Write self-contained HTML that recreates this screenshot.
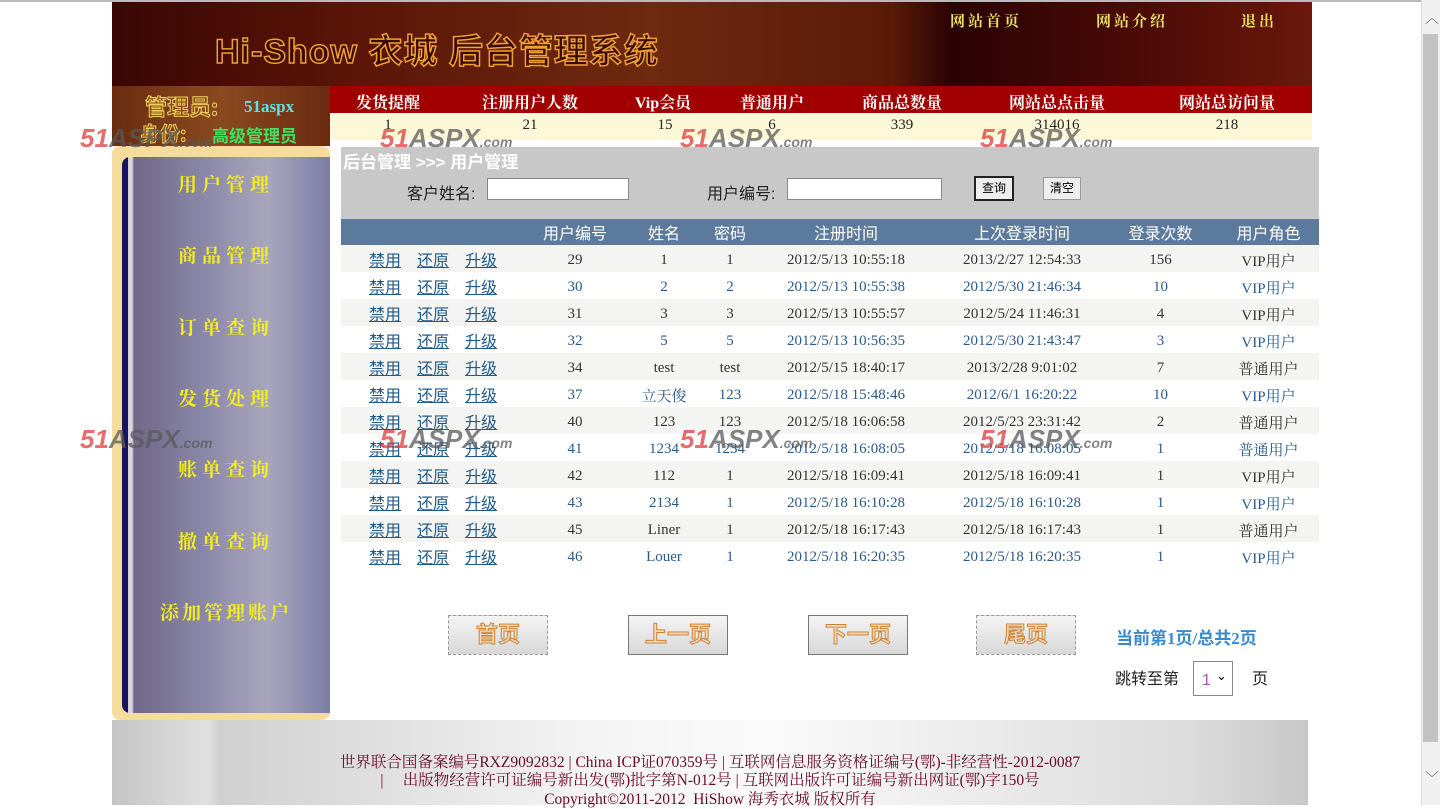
<!DOCTYPE html>
<html><head><meta charset="utf-8"><style>
body{margin:0;width:1440px;height:805px;overflow:hidden;background:#fff;font-family:"Liberation Serif","Noto Serif CJK SC",serif;position:relative}
.a{position:absolute}
.hdr{left:112px;top:2px;width:1200px;height:84px;background:linear-gradient(90deg,#3a0604 0%,#5a1508 20%,#6e2a10 45%,#5a1a08 65%,#2a0303 70%,#4a0a06 85%,#6a180c 100%)}
.title{left:215px;top:24px;font-size:34px;font-weight:bold;color:#3a0a02;-webkit-text-stroke:1.5px #f0a030;font-family:"Liberation Sans","Noto Sans CJK SC",sans-serif;letter-spacing:1px}
.nav{top:10px;font-size:15px;font-weight:bold;color:#e8e060;letter-spacing:3px;font-family:"Noto Serif CJK SC",serif}
.adm{left:112px;top:86px;width:218px;height:60px;background:linear-gradient(90deg,#6a2c10,#8a4a20,#6a2a10)}
.stat{left:330px;top:86px;width:982px;height:27px;background:#a00000;color:#fff;font-weight:bold;font-size:16px}
.val{left:330px;top:113px;width:982px;height:27px;background:#fdf8d8;color:#222;font-size:15px}
.stat span,.val span{position:absolute;top:4px;transform:translateX(-50%);white-space:nowrap}
.side{left:112px;top:146px;width:218px;height:574px;background:#f3dc9c;border-radius:8px}
.sidein{left:122px;top:157px;width:208px;height:556px;background:linear-gradient(90deg,#1a1460 0,#1a1460 6px,#d8d0d8 6px,#e0d8e0 10px,#706888 12px,#8a88a8 40%,#a8a6bc 70%,#7c7ca4 100%);border-radius:8px 0 0 8px}
.mi{left:122px;width:208px;text-align:center;color:#f2ec20;font-size:19px;font-weight:bold;letter-spacing:5px;font-family:"Noto Serif CJK SC",serif}
.gray{left:341px;top:147px;width:978px;height:72px;background:#c8c8c8}
table{position:absolute;left:341px;top:219px;width:978px;border-collapse:collapse;font-size:15px;color:#333}
th{background:#5c7b9c;color:#fff;font-weight:normal;font-size:16px;height:26px;padding:0;font-family:"Liberation Sans","Noto Sans CJK SC",sans-serif}
td{height:27px;padding:3px 0 0;box-sizing:border-box;text-align:center}
tr:nth-child(even) td{background:#f4f4f2}
td.ac{text-align:left;padding-left:28px;padding-top:0}
td.ac a{color:#1f5a8a;text-decoration:underline;margin-right:16px;font-size:16px;font-family:"Liberation Sans","Noto Sans CJK SC",sans-serif}
.blue td:nth-child(n+2){color:#2a5a8a}
.pb{top:615px;width:98px;height:38px;background:linear-gradient(#f4f4f4,#d8d8d8);border:1px dashed #999;text-align:center;line-height:38px;font-size:22px;font-weight:bold;color:#f0e0c8;-webkit-text-stroke:1px #d08030;font-family:"Liberation Sans","Noto Sans CJK SC",sans-serif}
.foot{left:112px;top:720px;width:1196px;height:85px;background:linear-gradient(90deg,#c4c4c4,#e0e0e0 8%,#d0d0d0 9%,#f4f4f4 40%,#fafafa 55%,#dcdcdc 90%,#c8c8c8)}
.ft{left:112px;width:1196px;text-align:center;color:#6a0a2a;font-size:15.5px;white-space:pre}
.wm{font-family:"Liberation Sans",sans-serif;font-weight:bold;font-style:italic;font-size:26px;color:rgba(220,60,60,.75)}
.wm b{color:rgba(90,90,90,.75)}.wm i{font-size:14px;color:rgba(90,90,90,.75)}
</style></head><body>
<div class="a" style="left:0;top:0;width:1440px;height:2px;background:#bbb"></div>
<div class="a hdr"></div>
<div class="a title">Hi-Show 衣城 后台管理系统</div>
<div class="a nav" style="left:950px">网站首页</div>
<div class="a nav" style="left:1096px">网站介绍</div>
<div class="a nav" style="left:1241px">退出</div>
<div class="a adm"></div>
<div class="a" style="left:145px;top:90px;font-size:22px;font-weight:bold;color:#8a4a10;-webkit-text-stroke:1px #f0d060;font-family:'Noto Sans CJK SC',sans-serif">管理员:</div>
<div class="a" style="left:244px;top:97px;font-size:17px;font-weight:bold;color:#60e0e0">51aspx</div>
<div class="a" style="left:140px;top:118px;font-size:20px;font-weight:bold;color:#8a4a10;-webkit-text-stroke:1px #f0d060;font-family:'Noto Sans CJK SC',sans-serif">身份:</div>
<div class="a" style="left:212px;top:122px;font-size:17px;font-weight:bold;color:#40e060;font-family:'Noto Sans CJK SC',sans-serif">高级管理员</div>
<div class="a stat"><span style="left:58px">发货提醒</span><span style="left:200px">注册用户人数</span><span style="left:333px">Vip会员</span><span style="left:442px">普通用户</span><span style="left:572px">商品总数量</span><span style="left:727px">网站总点击量</span><span style="left:897px">网站总访问量</span></div>
<div class="a val"><span style="left:58px">1</span><span style="left:200px">21</span><span style="left:335px">15</span><span style="left:442px">6</span><span style="left:572px">339</span><span style="left:727px">314016</span><span style="left:897px">218</span></div>
<div class="a side"></div>
<div class="a sidein"></div>
<div class="a mi" style="top:170px">用户管理</div>
<div class="a mi" style="top:241px">商品管理</div>
<div class="a mi" style="top:313px">订单查询</div>
<div class="a mi" style="top:384px">发货处理</div>
<div class="a mi" style="top:455px">账单查询</div>
<div class="a mi" style="top:527px">撤单查询</div>
<div class="a mi" style="top:598px;letter-spacing:3px">添加管理账户</div>
<div class="a gray"></div>
<div class="a" style="left:343px;top:148px;color:#fff;font-size:17px;font-weight:bold;font-family:'Liberation Sans','Noto Sans CJK SC',sans-serif">后台管理 &gt;&gt;&gt; 用户管理</div>
<div class="a" style="left:407px;top:180px;font-size:16px;color:#222;font-family:'Liberation Sans','Noto Sans CJK SC',sans-serif">客户姓名:</div>
<div class="a" style="left:487px;top:178px;width:140px;height:20px;background:#fff;border:1px solid #888"></div>
<div class="a" style="left:707px;top:180px;font-size:16px;color:#222;font-family:'Liberation Sans','Noto Sans CJK SC',sans-serif">用户编号:</div>
<div class="a" style="left:787px;top:178px;width:153px;height:20px;background:#fff;border:1px solid #888"></div>
<div class="a" style="left:974px;top:176px;width:36px;height:21px;border:2px solid #222;background:#eee;font-size:12px;text-align:center;line-height:20px;font-family:'Noto Sans CJK SC',sans-serif">查询</div>
<div class="a" style="left:1043px;top:177px;width:36px;height:21px;border:1px solid #999;background:#eee;font-size:12px;text-align:center;line-height:20px;font-family:'Noto Sans CJK SC',sans-serif">清空</div>
<table>
<tr><th style="width:190px"></th><th style="width:88px">用户编号</th><th style="width:90px">姓名</th><th style="width:42px">密码</th><th style="width:190px">注册时间</th><th style="width:162px">上次登录时间</th><th style="width:115px">登录次数</th><th>用户角色</th></tr>
<tr><td class="ac"><a>禁用</a><a>还原</a><a>升级</a></td><td>29</td><td>1</td><td>1</td><td>2012/5/13 10:55:18</td><td>2013/2/27 12:54:33</td><td>156</td><td>VIP用户</td></tr>
<tr class="blue"><td class="ac"><a>禁用</a><a>还原</a><a>升级</a></td><td>30</td><td>2</td><td>2</td><td>2012/5/13 10:55:38</td><td>2012/5/30 21:46:34</td><td>10</td><td>VIP用户</td></tr>
<tr><td class="ac"><a>禁用</a><a>还原</a><a>升级</a></td><td>31</td><td>3</td><td>3</td><td>2012/5/13 10:55:57</td><td>2012/5/24 11:46:31</td><td>4</td><td>VIP用户</td></tr>
<tr class="blue"><td class="ac"><a>禁用</a><a>还原</a><a>升级</a></td><td>32</td><td>5</td><td>5</td><td>2012/5/13 10:56:35</td><td>2012/5/30 21:43:47</td><td>3</td><td>VIP用户</td></tr>
<tr><td class="ac"><a>禁用</a><a>还原</a><a>升级</a></td><td>34</td><td>test</td><td>test</td><td>2012/5/15 18:40:17</td><td>2013/2/28 9:01:02</td><td>7</td><td>普通用户</td></tr>
<tr class="blue"><td class="ac"><a>禁用</a><a>还原</a><a>升级</a></td><td>37</td><td>立天俊</td><td>123</td><td>2012/5/18 15:48:46</td><td>2012/6/1 16:20:22</td><td>10</td><td>VIP用户</td></tr>
<tr><td class="ac"><a>禁用</a><a>还原</a><a>升级</a></td><td>40</td><td>123</td><td>123</td><td>2012/5/18 16:06:58</td><td>2012/5/23 23:31:42</td><td>2</td><td>普通用户</td></tr>
<tr class="blue"><td class="ac"><a>禁用</a><a>还原</a><a>升级</a></td><td>41</td><td>1234</td><td>1234</td><td>2012/5/18 16:08:05</td><td>2012/5/18 16:08:05</td><td>1</td><td>普通用户</td></tr>
<tr><td class="ac"><a>禁用</a><a>还原</a><a>升级</a></td><td>42</td><td>112</td><td>1</td><td>2012/5/18 16:09:41</td><td>2012/5/18 16:09:41</td><td>1</td><td>VIP用户</td></tr>
<tr class="blue"><td class="ac"><a>禁用</a><a>还原</a><a>升级</a></td><td>43</td><td>2134</td><td>1</td><td>2012/5/18 16:10:28</td><td>2012/5/18 16:10:28</td><td>1</td><td>VIP用户</td></tr>
<tr><td class="ac"><a>禁用</a><a>还原</a><a>升级</a></td><td>45</td><td>Liner</td><td>1</td><td>2012/5/18 16:17:43</td><td>2012/5/18 16:17:43</td><td>1</td><td>普通用户</td></tr>
<tr class="blue"><td class="ac"><a>禁用</a><a>还原</a><a>升级</a></td><td>46</td><td>Louer</td><td>1</td><td>2012/5/18 16:20:35</td><td>2012/5/18 16:20:35</td><td>1</td><td>VIP用户</td></tr>
</table>
<div class="a pb" style="left:448px">首页</div>
<div class="a pb" style="left:628px;border-style:solid;border-color:#777">上一页</div>
<div class="a pb" style="left:808px;border-style:solid;border-color:#777">下一页</div>
<div class="a pb" style="left:976px">尾页</div>
<div class="a" style="left:1116px;top:624px;font-size:17px;font-weight:bold;color:#3a8ad0;font-family:'Liberation Serif','Noto Sans CJK SC',serif">当前第1页/总共2页</div>
<div class="a" style="left:1115px;top:665px;font-size:16px;color:#222;font-family:'Liberation Sans','Noto Sans CJK SC',sans-serif">跳转至第</div>
<div class="a" style="left:1193px;top:661px;width:38px;height:33px;border:1px solid #888;background:#fff"><span style="position:absolute;left:8px;top:10px;color:#b050c0;font-size:16px;font-family:'Liberation Sans',sans-serif">1</span><span style="position:absolute;left:22px;top:6px;font-size:13px">⌄</span></div>
<div class="a" style="left:1252px;top:665px;font-size:16px;color:#222;font-family:'Noto Sans CJK SC',sans-serif">页</div>
<div class="a foot"></div>
<div class="a ft" style="top:750px">世界联合国备案编号RXZ9092832 | China ICP证070359号 | 互联网信息服务资格证编号(鄂)-非经营性-2012-0087</div>
<div class="a ft" style="top:768px">|     出版物经营许可证编号新出发(鄂)批字第N-012号 | 互联网出版许可证编号新出网证(鄂)字150号</div>
<div class="a ft" style="top:787px">Copyright©2011-2012  HiShow 海秀衣城 版权所有</div>
<div class="a wm" style="left:80px;top:123px">51<b>ASPX</b><i>.com</i></div>
<div class="a wm" style="left:380px;top:123px">51<b>ASPX</b><i>.com</i></div>
<div class="a wm" style="left:680px;top:123px">51<b>ASPX</b><i>.com</i></div>
<div class="a wm" style="left:980px;top:123px">51<b>ASPX</b><i>.com</i></div>
<div class="a wm" style="left:80px;top:424px">51<b>ASPX</b><i>.com</i></div>
<div class="a wm" style="left:380px;top:424px">51<b>ASPX</b><i>.com</i></div>
<div class="a wm" style="left:680px;top:424px">51<b>ASPX</b><i>.com</i></div>
<div class="a wm" style="left:980px;top:424px">51<b>ASPX</b><i>.com</i></div>
<div class="a" style="left:1421px;top:0;width:19px;height:805px;background:#f0f0f0;border-left:1px solid #ddd"></div>
<div class="a" style="left:1423px;top:34px;width:15px;height:708px;background:#c2c2c2"></div>
<div class="a" style="left:1425px;top:8px;font-size:14px;color:#555">︿</div>
<div class="a" style="left:1425px;top:768px;font-size:14px;color:#555">﹀</div>
</body></html>
